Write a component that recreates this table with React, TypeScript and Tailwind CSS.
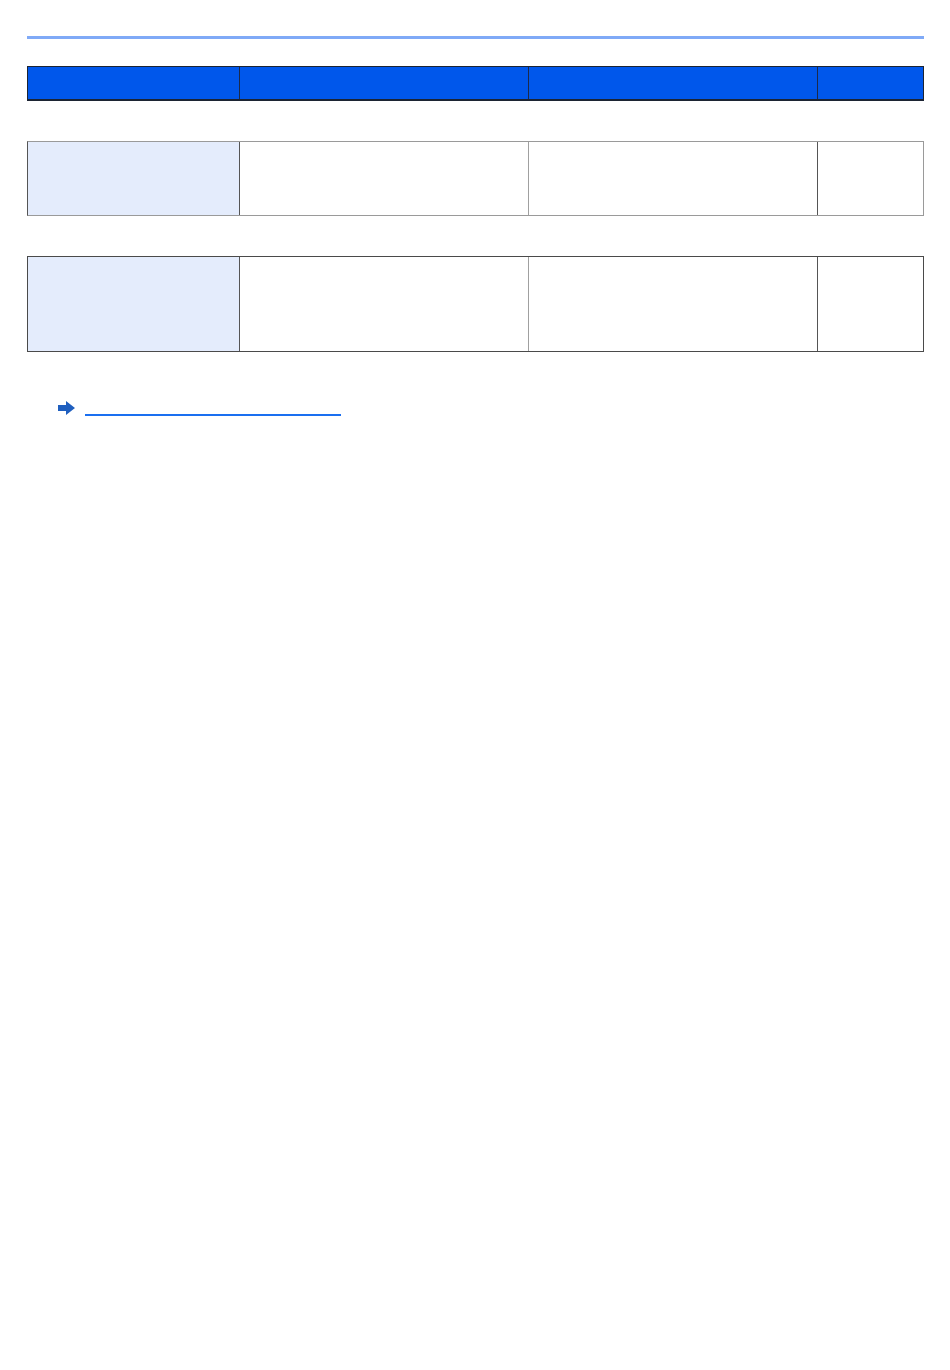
export default function App() {
  return (
    <div className="min-h-[1370px] w-[950px] bg-white font-['Liberation_Sans',sans-serif]">
      <div className="ml-[27px] w-[897px] pt-[36px]">
        {/* top rule */}
        <div className="h-[3px] bg-[#80aaf7]" />

        {/* header row */}
        <div className="mt-[27px] flex h-[35px] border border-b-2 border-[#1c2433] bg-[#0057eb]">
          <div className="w-[212px] border-r border-[#1c2a4a]" />
          <div className="w-[289px] border-r border-[#1c2a4a]" />
          <div className="w-[289px] border-r border-[#1c2a4a]" />
          <div className="flex-1" />
        </div>

        {/* row 1 */}
        <div className="mt-[40px] flex h-[75px] border border-[#9a9a9a] border-l-[#555]">
          <div className="w-[212px] border-r border-[#555] bg-[#e4ecfc]" />
          <div className="w-[289px] border-r border-[#a0a0a0]" />
          <div className="w-[289px] border-r border-[#555]" />
          <div className="flex-1" />
        </div>

        {/* row 2 */}
        <div className="mt-[40px] flex h-[96px] border border-[#4a4a4a]">
          <div className="w-[212px] border-r border-[#555] bg-[#e4ecfc]" />
          <div className="w-[289px] border-r border-[#a0a0a0]" />
          <div className="w-[289px] border-r border-[#555]" />
          <div className="flex-1" />
        </div>

        {/* link */}
        <div className="mt-[49px] flex items-start pl-[31px]">
          <svg width="17" height="14" viewBox="0 0 17 14" className="shrink-0">
            <path d="M0 4 H8 V0 L17 7 L8 14 V10 H0 Z" fill="#1f5fbf" />
          </svg>
          <a className="ml-[10px] mt-[13px] block h-[2px] w-[256px] bg-[#1a6ff0]" />
        </div>
      </div>
    </div>
  );
}
